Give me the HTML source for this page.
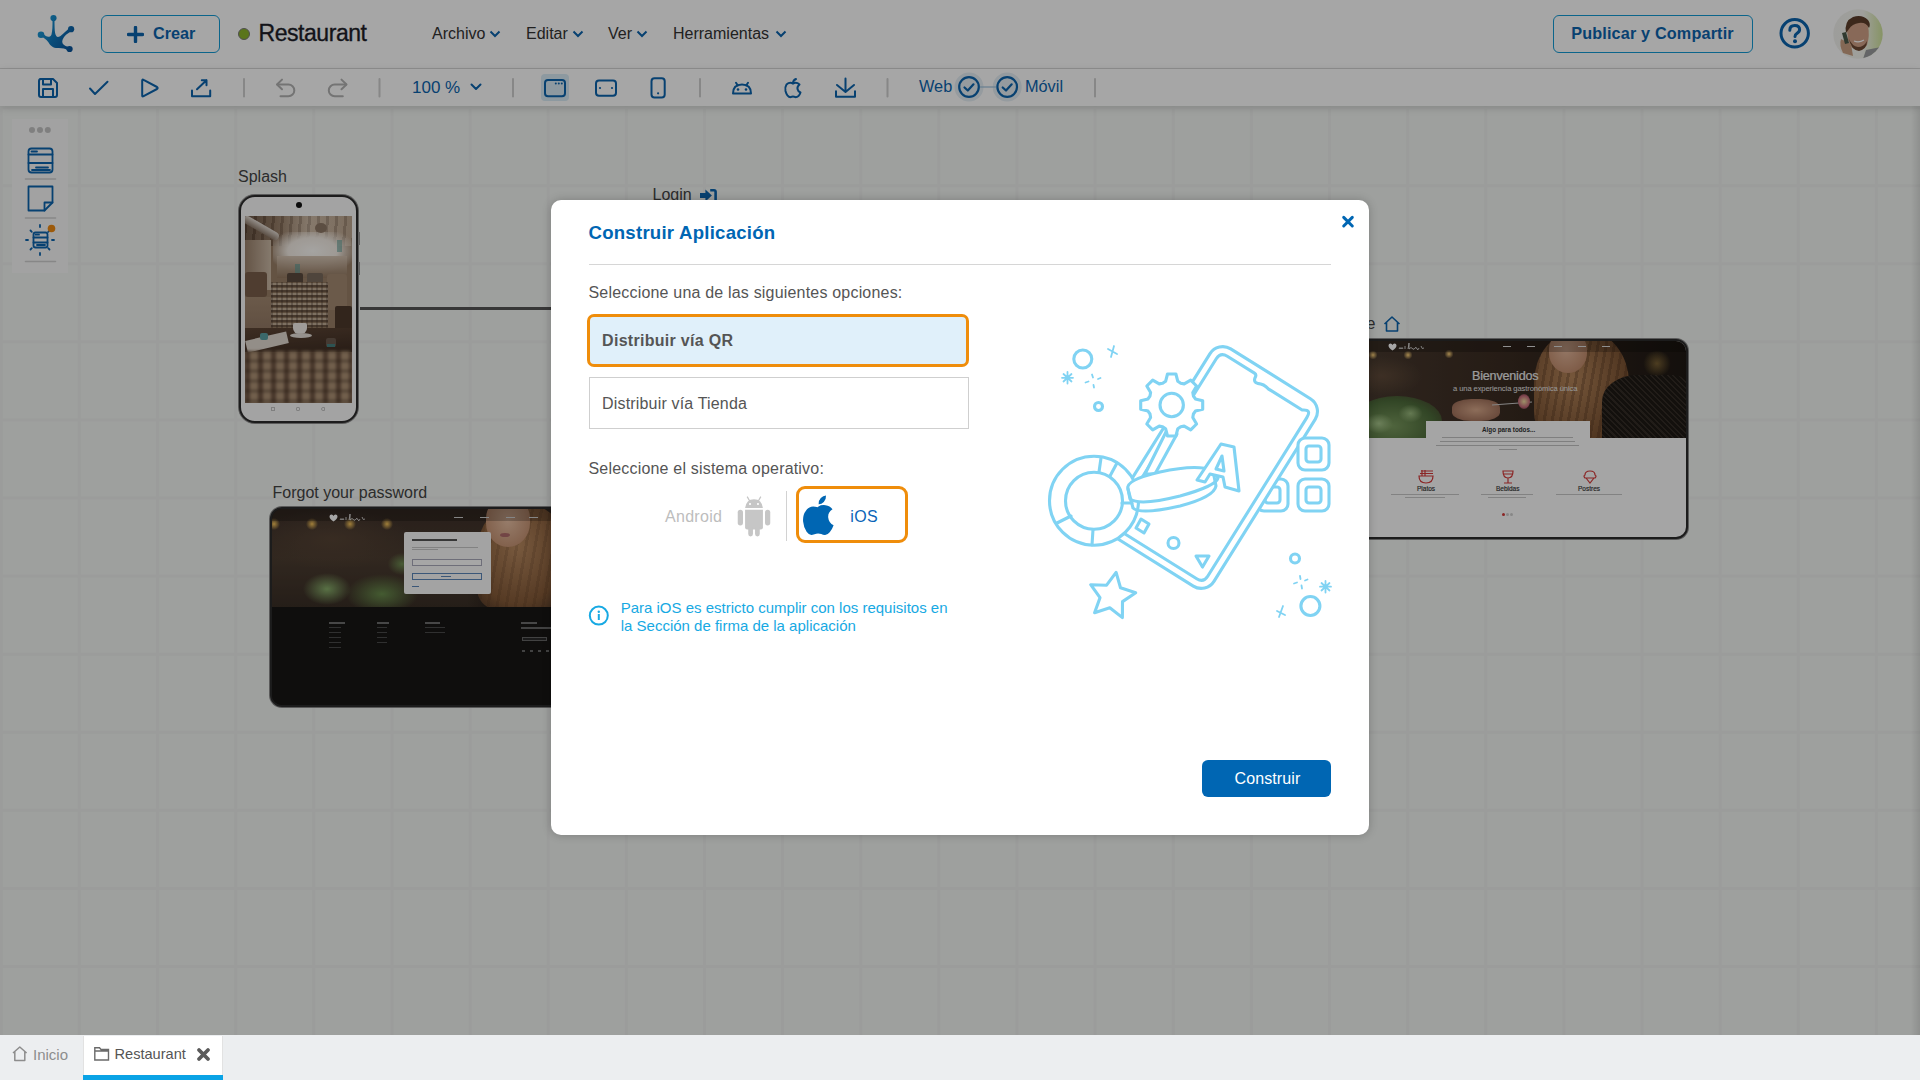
<!DOCTYPE html>
<html><head><meta charset="utf-8">
<style>
*{margin:0;padding:0;box-sizing:border-box}
html,body{width:1920px;height:1080px;overflow:hidden;background:#fff;font-family:"Liberation Sans",sans-serif;position:relative}
.abs{position:absolute}
#topbar{left:0;top:0;width:1920px;height:69px;background:#fff;border-bottom:1px solid #dcdcdc}
#toolbar{left:0;top:69px;width:1920px;height:37px;background:#fff;box-shadow:0 2px 8px rgba(0,0,0,.14)}
#canvas{left:0;top:106px;width:1920px;height:929px;background-color:#f3f6f3}
#tabs{left:0;top:1035px;width:1920px;height:45px;background:#eceef0}
#overlay{left:0;top:0;width:1920px;height:1035px;background:rgba(0,0,0,.35)}
.txt{white-space:nowrap;line-height:1}
.menu{font-size:16px;color:#333}
.sep{width:2px;height:19px;background:#bdbdbd}
#modal{left:551px;top:200px;width:818px;height:635px;background:#fff;border-radius:10px;box-shadow:0 0 10px rgba(0,0,0,.22)}
</style></head>
<body>
<div id="canvas" class="abs"><svg width="1920" height="929" style="position:absolute;left:0;top:0" fill="#eef0ee"><rect x="-0.20" y="0" width="3" height="929"/><rect x="77.93" y="0" width="3" height="929"/><rect x="156.06" y="0" width="3" height="929"/><rect x="234.19" y="0" width="3" height="929"/><rect x="312.32" y="0" width="3" height="929"/><rect x="390.45" y="0" width="3" height="929"/><rect x="468.58" y="0" width="3" height="929"/><rect x="546.71" y="0" width="3" height="929"/><rect x="624.84" y="0" width="3" height="929"/><rect x="702.97" y="0" width="3" height="929"/><rect x="781.10" y="0" width="3" height="929"/><rect x="859.23" y="0" width="3" height="929"/><rect x="937.36" y="0" width="3" height="929"/><rect x="1015.49" y="0" width="3" height="929"/><rect x="1093.62" y="0" width="3" height="929"/><rect x="1171.75" y="0" width="3" height="929"/><rect x="1249.88" y="0" width="3" height="929"/><rect x="1328.01" y="0" width="3" height="929"/><rect x="1406.14" y="0" width="3" height="929"/><rect x="1484.27" y="0" width="3" height="929"/><rect x="1562.40" y="0" width="3" height="929"/><rect x="1640.53" y="0" width="3" height="929"/><rect x="1718.66" y="0" width="3" height="929"/><rect x="1796.79" y="0" width="3" height="929"/><rect x="1874.92" y="0" width="3" height="929"/><rect x="0" y="0.20" width="1920" height="3"/><rect x="0" y="78.27" width="1920" height="3"/><rect x="0" y="156.34" width="1920" height="3"/><rect x="0" y="234.41" width="1920" height="3"/><rect x="0" y="312.48" width="1920" height="3"/><rect x="0" y="390.55" width="1920" height="3"/><rect x="0" y="468.62" width="1920" height="3"/><rect x="0" y="546.69" width="1920" height="3"/><rect x="0" y="624.76" width="1920" height="3"/><rect x="0" y="702.83" width="1920" height="3"/><rect x="0" y="780.90" width="1920" height="3"/><rect x="0" y="858.97" width="1920" height="3"/></svg></div>
<div id="canvasitems">
 <div class="abs" style="left:12px;top:119px;width:56px;height:154px;background:#f9f9f9"></div>
 <svg class="abs" style="left:0;top:110px" width="80" height="170" viewBox="0 110 80 170" fill="none" stroke-linecap="round" stroke-linejoin="round">
  <g fill="#c4c4c4"><circle cx="32" cy="130" r="3"/><circle cx="40" cy="130" r="3"/><circle cx="47.8" cy="130" r="3"/></g>
  <g stroke="#d0d0d0" stroke-width="1.6"><path d="M25.5 179H55.5M25.5 218H55.5M25.5 261.5H55.5"/></g>
  <g stroke="#0c64ae" stroke-width="1.8">
   <rect x="28.5" y="148.5" width="24" height="24" rx="3"/>
   <path d="M28.5 154.5H52.5M28.5 163H52.5M31.5 151.5H37M36 167.5H48M32 170H50"/>
   <path d="M28.5 186.5H52.5V202.5L44.5 210.5H28.5Z"/>
   <path d="M44.5 210.5V202.5H52.5"/>
   <rect x="33.5" y="232.5" width="14" height="15" rx="2"/>
   <path d="M33.5 237.5H47.5M33.5 242.5H47.5M35.5 234.7H39M37 245H45"/>
   <path d="M40 225V227M40 253V255M26 240H28M52 240H54M30.5 230.5L31.8 231.8M49.5 230.5L48.2 231.8M30.5 249.5L31.8 248.2M49.5 249.5L48.2 248.2"/>
  </g>
  <circle cx="51.5" cy="228.5" r="3.8" fill="#f08a12"/>
 </svg>

 <div class="abs txt" style="left:238px;top:169px;font-size:16px;color:#444">Splash</div>
 <div class="abs" style="left:238.5px;top:194.5px;width:119px;height:228px;border-radius:16px;border:2.6px solid #2b2b2b;box-shadow:0 0 0 1px #8a8a8a;background:#fafafa;overflow:hidden">
  <div class="abs" style="left:55.5px;top:5.5px;width:6px;height:6px;border-radius:50%;background:#111"></div>
  <div class="abs" style="left:4.5px;top:19px;width:107px;height:187px;overflow:hidden;background:#9a8068">
   <div class="abs" style="left:0;top:0;width:107px;height:30px;background:linear-gradient(90deg,#5e4838 0,#8a705a 30%,#c8b4a0 60%,#b59d86 100%)"></div>
   <div class="abs" style="left:0;top:0;width:107px;height:30px;background:repeating-linear-gradient(95deg,rgba(60,45,35,.18) 0 3px,rgba(255,240,220,.1) 3px 9px)"></div>
   <div class="abs" style="left:-4px;top:8px;width:40px;height:8px;background:linear-gradient(180deg,#e4dcd4,#8d7a6a);transform:rotate(30deg);border-radius:4px"></div>
   <div class="abs" style="left:28px;top:16px;width:79px;height:42px;background:radial-gradient(ellipse 45px 24px at 50% 45%,#fdfbf8 0,#f3ece4 55%,rgba(225,210,195,0) 100%)"></div>
   <div class="abs" style="left:70px;top:7px;width:12px;height:10px;border-radius:50%;background:#8e7866"></div>
   <div class="abs" style="left:0;top:24px;width:26px;height:50px;background:linear-gradient(90deg,#9b826c,#cdbba8)"></div>
   <div class="abs" style="left:32px;top:40px;width:70px;height:22px;background:linear-gradient(180deg,#d2c0ae,#937860);opacity:.9"></div>
   <div class="abs" style="left:50px;top:48px;width:5px;height:14px;background:#5a9a94;opacity:.6"></div>
   <div class="abs" style="left:92px;top:24px;width:5px;height:12px;background:#5a9a94;opacity:.55"></div>
   <div class="abs" style="left:42px;top:57px;width:16px;height:12px;background:#5b4a3e;border-radius:2px"></div>
   <div class="abs" style="left:62px;top:57px;width:16px;height:12px;background:#7a6a5c;border-radius:2px"></div>
   <div class="abs" style="left:0;top:56px;width:22px;height:25px;background:#7a5f4a;border-radius:3px"></div>
   <div class="abs" style="left:0;top:81px;width:30px;height:45px;background:linear-gradient(180deg,#a48a72,#8e7460)"></div>
   <div class="abs" style="left:82px;top:58px;width:20px;height:36px;background:#a58a72;border-radius:3px"></div>
   <div class="abs" style="left:90px;top:90px;width:17px;height:25px;background:#4d3a2c;border-radius:2px"></div>
   <div class="abs" style="left:26px;top:66px;width:57px;height:50px;background:repeating-linear-gradient(0deg,#6e5846 0 2px,#c0ac96 2px 4px,#917860 4px 5px),#917860;border-radius:3px 3px 0 0;filter:blur(.5px)"></div>
   <div class="abs" style="left:26px;top:66px;width:57px;height:50px;background:repeating-linear-gradient(90deg,rgba(60,45,35,.3) 0 2px,transparent 2px 5px)"></div>
   <div class="abs" style="left:0;top:112px;width:107px;height:24px;background:linear-gradient(175deg,#5e4636,#3e2d22)"></div>
   <div class="abs" style="left:48px;top:107px;width:14px;height:11px;border-radius:2px 2px 6px 6px;background:#f4f0ec"></div>
   <div class="abs" style="left:45px;top:117px;width:22px;height:5px;border-radius:50%;background:#e6e0da"></div>
   <div class="abs" style="left:1px;top:120px;width:42px;height:12px;background:#e2dad2;transform:rotate(-13deg)"></div>
   <div class="abs" style="left:15px;top:117px;width:8px;height:7px;background:#5aa0a4;border-radius:2px"></div>
   <div class="abs" style="left:81px;top:122px;width:10px;height:9px;background:#6b5a4e;border-radius:2px"></div>
   <div class="abs" style="left:82px;top:128px;width:8px;height:3px;background:#46807f"></div>
   <div class="abs" style="left:0;top:135px;width:107px;height:52px;background:repeating-linear-gradient(90deg,#6e5442 0 5px,#ae9276 5px 13px),#8f735a;filter:blur(1.5px)"></div>
   <div class="abs" style="left:0;top:135px;width:107px;height:52px;background:repeating-linear-gradient(0deg,rgba(50,35,25,.25) 0 4px,transparent 4px 10px);filter:blur(1px)"></div>
  </div>
  <div class="abs" style="left:30px;top:210px;width:4px;height:4px;border:1px solid #c4c4c4"></div>
  <div class="abs" style="left:55px;top:210px;width:4px;height:4px;border:1px solid #c4c4c4;border-radius:1px"></div>
  <div class="abs" style="left:80px;top:210px;width:4px;height:4px;border:1px solid #c4c4c4;border-radius:50% 0 0 50%"></div>
 </div>
 <div class="abs" style="left:358px;top:232px;width:2px;height:13px;background:#999"></div>
 <div class="abs" style="left:358px;top:262px;width:2px;height:13px;background:#999"></div>
 <div class="abs" style="left:360px;top:307px;width:200px;height:2.5px;background:#555"></div>

 <div class="abs txt" style="left:652.5px;top:187px;font-size:16px;color:#444">Login</div>
 <svg class="abs" style="left:698px;top:186px" width="22" height="14" viewBox="0 0 22 14"><path d="M2 6.9H7.4V3.4L13.9 9.5L7.4 15.5V11.9H2Z" fill="#0c64ae"/><path d="M12.2 4.2H16Q17.6 4.2 17.6 5.8V16" stroke="#0c64ae" stroke-width="2.6" fill="none"/></svg>

 <div class="abs txt" style="left:272.5px;top:484.7px;font-size:16px;color:#444">Forgot your password</div>
 <div class="abs" style="left:269.5px;top:507px;width:420px;height:200px;border-radius:12px;border:2.6px solid #2b2b2b;box-shadow:0 0 0 1px #8a8a8a;background:#181614;overflow:hidden">
  <div class="abs" style="left:0;top:0;width:420px;height:98px;background:
    
    radial-gradient(ellipse 30px 50px at 225px 95px,rgba(40,30,25,.9),transparent),
    radial-gradient(ellipse 30px 20px at 55px 80px,rgba(140,180,110,.95),transparent 80%),
    radial-gradient(ellipse 45px 25px at 110px 85px,rgba(110,150,80,.9),transparent 80%),
    radial-gradient(ellipse 18px 14px at 130px 55px,rgba(120,160,90,.8),transparent 80%),
    radial-gradient(circle 6px at 2px 15px,#f7c45a,transparent),radial-gradient(circle 6px at 40px 15px,#f7c45a,transparent),radial-gradient(circle 6px at 78px 15px,#f7c45a,transparent),radial-gradient(circle 6px at 115px 15px,#f7c45a,transparent),
    radial-gradient(ellipse 80px 30px at 60px 30px,rgba(90,70,55,.8),transparent),
    linear-gradient(180deg,#3d3029,#4c3d31 50%,#3a2f26)"></div>
  <div class="abs" style="left:205px;top:-5px;width:90px;height:105px;border-radius:45% 45% 20% 20%;background:repeating-linear-gradient(100deg,rgba(60,35,20,.14) 0 3px,transparent 3px 9px),radial-gradient(ellipse at 45% 40%,#b98a60,#845a38 65%,rgba(80,50,30,.3) 100%)"></div>
  <div class="abs" style="left:214px;top:-10px;width:44px;height:48px;border-radius:40% 40% 50% 50%;background:radial-gradient(ellipse at 50% 45%,#e8c0a4,#c49070 80%)"></div>
  <div class="abs" style="left:228px;top:24px;width:10px;height:4px;border-radius:50%;background:#b06a6a"></div>
  <div class="abs" style="left:0;top:0;width:420px;height:12px;background:rgba(0,0,0,.22)"></div>
  <svg class="abs" style="left:56px;top:4px" width="40" height="10" viewBox="0 0 40 10"><path d="M1.5 3.5Q1.5 1.5 3.5 1.5Q5 1.5 5.5 3Q6 1.5 7.5 1.5Q9.5 1.5 9.5 3.5Q9.5 6 5.5 8.5Q1.5 6 1.5 3.5Z" fill="#fff"/><path d="M12 7Q13 4 14 7Q15 4 16 7M18 4V7M21 7Q22 2 22 1V7Q24 4 26 7Q27 8 28 6Q29 4 30 7Q31 9 32 6M34 4Q35 8 37 6" stroke="#eee" stroke-width="0.8" fill="none"/></svg>
  <div class="abs" style="left:182px;top:8px;width:9px;height:1.2px;background:#ccc"></div>
  <div class="abs" style="left:208px;top:8px;width:9px;height:1.2px;background:#ccc"></div>
  <div class="abs" style="left:234px;top:8px;width:9px;height:1.2px;background:#ccc"></div>
  <div class="abs" style="left:257px;top:8px;width:9px;height:1.2px;background:#ccc"></div>
  <div class="abs" style="left:132px;top:23px;width:87px;height:62px;background:#fbfbfb;border-radius:2px"></div>
  <div class="abs" style="left:140px;top:30px;width:45px;height:2px;background:#555"></div>
  <div class="abs" style="left:140px;top:37.5px;width:66px;height:1.3px;background:#c8c8c8"></div>
  <div class="abs" style="left:140px;top:40px;width:26px;height:1.3px;background:#c8c8c8"></div>
  <div class="abs" style="left:140px;top:50px;width:70px;height:7px;border:1px solid #aab;background:#fff"></div>
  <div class="abs" style="left:140px;top:64px;width:70px;height:7px;border:1px solid #5b86b8"></div>
  <div class="abs" style="left:169px;top:67px;width:10px;height:1px;background:#5b86b8"></div>
  <div class="abs" style="left:140px;top:77px;width:7px;height:1.3px;background:#5b86b8"></div>
  <div class="abs" style="left:0;top:98px;width:420px;height:100px;background:#181614"></div>
  <div class="abs" style="left:57px;top:113px;width:16px;height:1.8px;background:#6e6e6e"></div>
  <div class="abs" style="left:105px;top:113px;width:12px;height:1.8px;background:#6e6e6e"></div>
  <div class="abs" style="left:153px;top:113px;width:15px;height:1.8px;background:#6e6e6e"></div>
  <div class="abs" style="left:249px;top:113px;width:16px;height:1.8px;background:#6e6e6e"></div>
  <div class="abs" style="left:249px;top:118px;width:30px;height:2.2px;background:#666"></div>
  <div class="abs" style="left:250px;top:128px;width:25px;height:4px;border:1px solid #666;background:#2a2a2a"></div>
  <div class="abs" style="left:57px;top:118px;width:12px;height:24px;background:repeating-linear-gradient(180deg,#4a4a4a 0 1px,transparent 1px 5px)"></div>
  <div class="abs" style="left:105px;top:118px;width:10px;height:19px;background:repeating-linear-gradient(180deg,#4a4a4a 0 1px,transparent 1px 5px)"></div>
  <div class="abs" style="left:153px;top:118px;width:20px;height:9px;background:repeating-linear-gradient(180deg,#4a4a4a 0 1px,transparent 1px 5px)"></div>
  <div class="abs" style="left:250px;top:141px;width:28px;height:2px;background:repeating-linear-gradient(90deg,#666 0 3px,transparent 3px 8px)"></div>
  <g></g>
 </div>
 <div class="abs txt" style="left:1332.7px;top:315.8px;font-size:16px;color:#444">Home</div>
 <svg class="abs" style="left:1382px;top:314px" width="20" height="19" viewBox="0 0 20 19"><path d="M2.5 10L10 3L17.5 10M4.5 8.5V17H15.5V8.5" stroke="#0c64ae" stroke-width="1.6" fill="none" stroke-linejoin="round"/></svg>
 <div class="abs" style="left:1050px;top:338.5px;width:638px;height:200px;border-radius:12px;border:2.6px solid #2b2b2b;box-shadow:0 0 0 1px #8a8a8a;background:#fdfdfd;overflow:hidden">
  <div class="abs" style="left:0;top:0;width:638px;height:97px;overflow:hidden;background:
    radial-gradient(circle 4.5px at 321px 14px,#ffd27a,rgba(255,200,100,0) 100%),
    radial-gradient(circle 4.5px at 356px 14px,#ffd27a,rgba(255,200,100,0) 100%),
    radial-gradient(circle 4.5px at 397px 13px,#ffd27a,rgba(255,200,100,0) 100%),
    radial-gradient(ellipse 40px 20px at 330px 35px,rgba(110,85,65,.6),transparent),
    linear-gradient(90deg,#3b2f27 0,#4a3c31 45%,#3b2c22 70%,#1e1813 100%)">
   <div class="abs" style="left:482px;top:-10px;width:95px;height:115px;border-radius:45% 45% 30% 30%;background:repeating-linear-gradient(100deg,rgba(60,35,20,.25) 0 3px,transparent 3px 8px),radial-gradient(ellipse at 40% 40%,#b5855a,#7a5232 70%,rgba(80,50,30,0) 100%)"></div>
   <div class="abs" style="left:497px;top:-8px;width:38px;height:40px;border-radius:40% 40% 50% 50%;background:radial-gradient(ellipse at 45% 40%,#e3b79c,#c08a6a 80%)"></div>
   <div class="abs" style="left:550px;top:34px;width:88px;height:66px;border-radius:40% 20% 0 0;background:repeating-linear-gradient(45deg,rgba(90,80,70,.35) 0 1.5px,transparent 1.5px 4px),#1e1915"></div>
   <div class="abs" style="left:590px;top:10px;width:30px;height:25px;border-radius:50%;background:radial-gradient(circle,rgba(200,160,80,.5),transparent 70%)"></div>
   <div class="abs" style="left:400px;top:58px;width:48px;height:22px;border-radius:40%;background:radial-gradient(ellipse,#d8a88a,#a0705a 80%,rgba(160,110,90,0))"></div>
   <div class="abs" style="left:440px;top:62px;width:40px;height:1.2px;background:#ccc;transform:rotate(-4deg)"></div>
   <div class="abs" style="left:466px;top:53px;width:12px;height:15px;border-radius:50%;background:radial-gradient(circle,#f0e0a0,#c56a7a 60%,rgba(200,100,100,0))"></div>
   <div class="abs" style="left:300px;top:55px;width:90px;height:50px;border-radius:50% 50% 0 0;background:radial-gradient(ellipse 14px 10px at 30% 55%,#a6c48a,transparent),radial-gradient(ellipse 12px 9px at 65% 35%,#9aba7e,transparent),radial-gradient(ellipse at 45% 60%,#7a9a5e,#4d6b3a 60%,rgba(60,80,40,0) 100%)"></div>
   <div class="abs" style="left:0;top:0;width:638px;height:11px;background:rgba(0,0,0,.22)"></div>
   <svg class="abs" style="left:335px;top:1px" width="42" height="10" viewBox="0 0 42 10"><path d="M1.5 3.5Q1.5 1.5 3.5 1.5Q5 1.5 5.5 3Q6 1.5 7.5 1.5Q9.5 1.5 9.5 3.5Q9.5 6 5.5 8.5Q1.5 6 1.5 3.5Z" fill="#fff"/><path d="M12 7Q13 4 14 7Q15 4 16 7M18 4V7M21 7Q22 2 22 1V7Q24 4 26 7Q27 8 28 6Q29 4 30 7Q31 9 32 6M34 4Q35 8 37 6" stroke="#eee" stroke-width="0.8" fill="none"/></svg>
   <div class="abs" style="left:451px;top:5px;width:8px;height:1.2px;background:#ddd"></div>
   <div class="abs" style="left:475px;top:5px;width:8px;height:1.2px;background:#ddd"></div>
   <div class="abs" style="left:502px;top:5px;width:8px;height:1.2px;background:#ddd"></div>
   <div class="abs" style="left:526px;top:5px;width:8px;height:1.2px;background:#ddd"></div>
   <div class="abs" style="left:550px;top:5px;width:8px;height:1.2px;background:#ddd"></div>
  </div>
  <div class="abs txt" style="left:420px;top:29.4px;font-size:12.6px;color:#f0f0f0;letter-spacing:-0.2px;-webkit-text-stroke:.2px #f0f0f0">Bienvenidos</div>
  <div class="abs txt" style="left:401px;top:44.5px;font-size:7.6px;color:#e8e8e8;letter-spacing:-0.1px">a una experiencia gastronómica única</div>
  <div class="abs" style="left:373.5px;top:80px;width:164px;height:30px;background:#fdfdfd"></div>
  <div class="abs txt" style="left:430px;top:86px;font-size:6.3px;font-weight:700;color:#333">Algo para todos...</div>
  <div class="abs" style="left:390px;top:96.8px;width:131px;height:1px;background:#c4c4c4"></div>
  <div class="abs" style="left:388px;top:100.7px;width:135px;height:1px;background:#c4c4c4"></div>
  <div class="abs" style="left:384px;top:104.6px;width:143px;height:1px;background:#c4c4c4"></div>
  <div class="abs" style="left:447px;top:108.4px;width:18px;height:1px;background:#c4c4c4"></div>
  <svg class="abs" style="left:351px;top:126px" width="210" height="20" viewBox="0 0 210 20" fill="none" stroke="#d63a3a" stroke-width="1.2">
   <path d="M16 9H30Q30 16 23 16Q16 16 16 9ZM17 6.5H30M18 4H30M19 3V9M22 3V9"/>
   <path d="M100 4H110Q110 11 105 11Q100 11 100 4ZM105 11V16M101 16H109M100 7H110"/>
   <path d="M182 8Q182 4 187 4Q192 4 192 8Q194 9 192 11H182Q180 9 182 8ZM183 11L187 16L191 11"/>
  </svg>
  <div class="abs txt" style="left:365px;top:145.5px;font-size:6.5px;font-weight:400;color:#333;-webkit-text-stroke:.15px #333">Platos</div>
  <div class="abs txt" style="left:444px;top:145.5px;font-size:6.5px;font-weight:400;color:#333;-webkit-text-stroke:.15px #333">Bebidas</div>
  <div class="abs txt" style="left:526px;top:145.5px;font-size:6.5px;font-weight:400;color:#333;-webkit-text-stroke:.15px #333">Postres</div>
  <div class="abs" style="left:339px;top:153px;width:68px;height:1.1px;background:#c8c8c8"></div>
  <div class="abs" style="left:353px;top:156.3px;width:40px;height:1.1px;background:#c8c8c8"></div>
  <div class="abs" style="left:429px;top:153px;width:52px;height:1.1px;background:#c8c8c8"></div>
  <div class="abs" style="left:436px;top:156.3px;width:38px;height:1.1px;background:#c8c8c8"></div>
  <div class="abs" style="left:504px;top:153px;width:66px;height:1.1px;background:#c8c8c8"></div>
  <div class="abs" style="left:449.5px;top:172.5px;width:3px;height:3px;border-radius:50%;background:#d63a3a"></div>
  <div class="abs" style="left:453.5px;top:172.5px;width:3px;height:3px;border-radius:50%;background:#d0d0d0"></div>
  <div class="abs" style="left:457.5px;top:172.5px;width:3px;height:3px;border-radius:50%;background:#d0d0d0"></div>
 </div>
</div>

<div id="topbar" class="abs">
 <svg class="abs" style="left:30px;top:10px" width="50" height="46" viewBox="30 10 50 46">
  <defs><linearGradient id="lg" gradientUnits="userSpaceOnUse" x1="38" y1="30" x2="72" y2="50"><stop offset="0" stop-color="#1b9ad6"/><stop offset=".5" stop-color="#0e73b8"/><stop offset="1" stop-color="#0a5299"/></linearGradient></defs>
  <g fill="url(#lg)">
   <path d="M52.5 20C52.6 26 52.4 31 51.5 34.5C50.8 36.6 48.3 37.6 45.8 36L42.5 33.2L41.2 36.8C44 37.8 46 39.2 48 41.8C50 44.8 51.8 47.6 56 47.9C60 48.1 63 47.7 66 49.2L68.6 51.2L70.6 47.4C67 46.6 63.6 45.6 62.5 43.2C61.6 40.6 63 38 66 34.8L72.2 30.6L70 27.4C66 31 62 35 59.6 36.5C57 37.8 55.7 36 55.1 33C54.6 30 54.5 25 54.5 20Z"/>
   <circle cx="53.5" cy="18.1" r="3.1"/>
   <circle cx="71.1" cy="29.2" r="3.1"/>
   <circle cx="41" cy="34.7" r="3.3"/>
   <circle cx="69.6" cy="49" r="3.1"/>
  </g>
 </svg>
 <div class="abs" style="left:101px;top:15px;width:119px;height:38px;border:1.6px solid #129bd6;border-radius:6px"></div>
 <svg class="abs" style="left:127px;top:26px" width="17" height="17"><path d="M8.5 1.5V15.5M1.5 8.5H15.5" stroke="#0c64ae" stroke-width="3.4" stroke-linecap="round"/></svg>
 <div class="abs txt" style="left:153px;top:25px;font-size:16.2px;font-weight:700;color:#0c64ae">Crear</div>
 <div class="abs" style="left:238px;top:28px;width:12px;height:12px;border-radius:50%;background:#8bb42a;border:1px solid #7a7a7a"></div>
 <div class="abs txt" style="left:258.5px;top:22.4px;font-size:23px;letter-spacing:-0.45px;color:#1e1e28;-webkit-text-stroke:0.35px #1e1e28">Restaurant</div>
 <div class="abs txt menu" style="left:432px;top:26px">Archivo</div>
 <svg class="abs" style="left:489px;top:30px" width="12" height="8"><path d="M1.5 1.5L6 6L10.5 1.5" stroke="#0c64ae" stroke-width="2" fill="none"/></svg>
 <div class="abs txt menu" style="left:526px;top:26px">Editar</div>
 <svg class="abs" style="left:572px;top:30px" width="12" height="8"><path d="M1.5 1.5L6 6L10.5 1.5" stroke="#0c64ae" stroke-width="2" fill="none"/></svg>
 <div class="abs txt menu" style="left:608px;top:26px">Ver</div>
 <svg class="abs" style="left:636px;top:30px" width="12" height="8"><path d="M1.5 1.5L6 6L10.5 1.5" stroke="#0c64ae" stroke-width="2" fill="none"/></svg>
 <div class="abs txt menu" style="left:673px;top:26px">Herramientas</div>
 <svg class="abs" style="left:775px;top:30px" width="12" height="8"><path d="M1.5 1.5L6 6L10.5 1.5" stroke="#0c64ae" stroke-width="2" fill="none"/></svg>
 <div class="abs" style="left:1553px;top:15px;width:200px;height:38px;border:1.6px solid #129bd6;border-radius:6px"></div>
 <div class="abs txt" style="left:1571.2px;top:25px;font-size:16.2px;font-weight:700;color:#0c64ae;letter-spacing:0.17px">Publicar y Compartir</div>
 <svg class="abs" style="left:1778px;top:17px" width="34" height="34" viewBox="0 0 34 34"><circle cx="16.7" cy="16.3" r="13.7" stroke="#0c64ae" stroke-width="3" fill="none"/><path d="M11.8 13.2Q11.8 8.4 16.8 8.4Q21.6 8.4 21.6 12.6Q21.6 15 19 16.4Q17 17.5 17 19.6" stroke="#0c64ae" stroke-width="3" fill="none" stroke-linecap="round"/><circle cx="17" cy="24.3" r="2" fill="#0c64ae"/></svg>
 <svg class="abs" style="left:1833px;top:9px" width="50" height="50" viewBox="0 0 50 50">
   <defs><clipPath id="av"><circle cx="25" cy="25" r="24.7"/></clipPath>
   <linearGradient id="avbg" x1="0" y1="0" x2="1" y2="0"><stop offset="0" stop-color="#f2f2ee"/><stop offset=".6" stop-color="#f4f5ef"/><stop offset="1" stop-color="#cfe39a"/></linearGradient></defs>
   <g clip-path="url(#av)">
    <rect width="50" height="50" fill="url(#avbg)"/>
    <path d="M30 50L33 41L48 38L50 50Z" fill="#9a9c9e"/>
    <path d="M14 22Q13 12 22 10Q32 9 35 17Q37 27 34 36Q30 42 24 41Q17 39 15 31Z" fill="#d1a287"/>
    <path d="M13 24Q11 12 20 8Q29 5 35 11Q38 15 36 19Q33 13 26 14Q19 15 16 20Z" fill="#5c3e2a"/>
    <path d="M16 30Q19 37 25 38Q31 38 34 32Q34 40 26 42Q18 41 16 30Z" fill="#6e4b35"/>
    <path d="M21 32Q26 34 31 31" stroke="#fff" stroke-width="1.2" fill="none"/>
    <path d="M8 30Q6 36 10 44L20 47L18 35Z" fill="#caa083"/>
    <path d="M9 24L13 23L16 34L12 35Z" fill="#4a5a4a"/>
   </g>
  </svg>
</div>
<div id="toolbar" class="abs">

 <div class="abs" style="left:541px;top:5px;width:28px;height:26.5px;border-radius:4px;background:#d9ecf6"></div>
 <div class="abs txt" style="left:412px;top:10px;font-size:17px;color:#0c64ae">100 %</div>
 <div class="abs txt" style="left:919px;top:9.2px;font-size:16.3px;color:#0c64ae">Web</div>
 <div class="abs txt" style="left:1025px;top:9.2px;font-size:16.3px;color:#0c64ae">Móvil</div>
 <svg class="abs" style="left:950px;top:0" width="80" height="37" viewBox="950 69 80 37">
  <circle cx="969" cy="87" r="14.5" fill="#e5eef4"/><circle cx="1007.2" cy="87" r="14.5" fill="#e5eef4"/>
  <path d="M980 87H996" stroke="#9ec3de" stroke-width="1.2"/>
  <g stroke="#0c64ae" stroke-width="2.2" fill="none" stroke-linecap="round" stroke-linejoin="round">
   <circle cx="969" cy="87" r="9.8"/><circle cx="1007.2" cy="87" r="9.8"/>
   <path d="M964.5 87.5L967.8 90.5L973.5 84.3M1002.7 87.5L1006 90.5L1011.7 84.3"/>
  </g>
 </svg>
 <svg class="abs" style="left:0;top:0" width="1920" height="37" viewBox="0 69 1920 37" fill="none" stroke-linecap="round" stroke-linejoin="round">
  <g stroke="#0c64ae" stroke-width="2">
   <path d="M40 79H53L57 83V95Q57 97 55 97H41Q39 97 39 95V81Q39 79 41 79Z"/>
   <path d="M43 79.5V84.5H51V79.5"/>
   <path d="M43 96.5V89H53V96.5"/>
   <path d="M90 88.5L95 94L107.5 81.8"/>
   <path d="M142.2 80.5V95.5Q142.2 97 143.6 96.2L157 89Q158.3 88 157 87L143.6 79.8Q142.2 79 142.2 80.5Z"/>
   <path d="M192 90.5V96.3H210.2V90.5"/>
   <path d="M197 89.2L206.5 80.2M201.8 80.2H206.5V85.2"/>
   <rect x="545" y="80" width="20" height="16.2" rx="3"/>
   <rect x="596" y="80.5" width="20" height="15.2" rx="3"/>
   <rect x="651.5" y="78.2" width="13.2" height="19.2" rx="3"/>
   <path d="M836 91.2V96.8H855V91.2"/>
   <path d="M845.5 78.5V91.8M837 85L845.5 92L854 85"/>
   <path d="M786.5 84.5Q789.5 81.8 793 83.5Q796.5 81.8 799.5 84.5Q797 86.5 797.5 89Q798 91.5 800.5 92.5Q799 97 795.5 97.2Q794 96.5 793 96.5Q792 96.5 790.5 97.2Q787 97 785.5 91Q784.8 87 786.5 84.5Z"/>
   <path d="M793 83.2Q793 80.2 796 79"/>
   <path d="M733 93.5Q733 84.5 742 84.5Q751 84.5 751 93.5Z"/>
   <path d="M736 82.8L737.8 85.5M748 82.8L746.2 85.5"/>
  </g>
  <g fill="#0c64ae">
   <circle cx="555.8" cy="83.5" r="1"/><circle cx="558.8" cy="83.5" r="1"/><circle cx="561.8" cy="83.5" r="1"/>
   <circle cx="600" cy="88" r="1.1"/><circle cx="612" cy="88" r="1.1"/>
   <circle cx="658.1" cy="93.3" r="1.1"/>
  </g>
  <g fill="#0c64ae"><circle cx="738" cy="89.5" r="1.3"/><circle cx="746" cy="89.5" r="1.3"/></g>
  <g stroke="#b3b3b3" stroke-width="2">
   <path d="M282 79.6L277 84.5L282 89.2"/><path d="M277.5 84.5H288.4A5.9 5.9 0 0 1 288.4 96.3H280.5"/>
   <path d="M341.5 79.6L346.5 84.5L341.5 89.2"/><path d="M346 84.5H334.7A5.9 5.9 0 0 0 334.7 96.3H342.8"/>
  </g>
  <g stroke="#cfcfcf" stroke-width="2">
   <path d="M244 79V96.5M379.5 79V96.5M513 79V96.5M700 79V96.5M887.5 79V96.5M1095 79V96.5"/>
  </g>
  <g stroke="#0c64ae" stroke-width="2"><path d="M471.5 84.5L476 89L480.5 84.5"/></g>
 </svg>
</div>

<div class="abs" style="left:1911px;top:106px;width:9px;height:929px;background:linear-gradient(90deg,rgba(0,0,0,0),rgba(0,0,0,.1))"></div>
<div id="tabs" class="abs">
 <svg class="abs" style="left:11px;top:10px" width="18" height="18" viewBox="0 0 18 18"><path d="M2 8L8.8 2L15.6 8M3.8 6.5V15.5H13.8V6.5" stroke="#8d8d8d" stroke-width="1.5" fill="none" stroke-linejoin="round"/></svg>
 <div class="abs txt" style="left:33px;top:12px;font-size:15px;color:#8d8d8d">Inicio</div>
 <div class="abs" style="left:82.5px;top:1px;width:140px;height:44px;background:#fff;border-left:1px solid #e2e2e2;border-right:1px solid #e2e2e2"></div>
 <div class="abs" style="left:82.5px;top:40px;width:140px;height:5px;background:#0aa3e6"></div>
 <svg class="abs" style="left:93px;top:11px" width="18" height="16" viewBox="0 0 18 16"><path d="M1.8 1.8H6.5L8 3.5H15.5V14H1.8Z M1.8 5H15.5" stroke="#6a6a6a" stroke-width="1.4" fill="none"/></svg>
 <div class="abs txt" style="left:114.5px;top:12px;font-size:14.6px;color:#555">Restaurant</div>
 <svg class="abs" style="left:196px;top:12px" width="15" height="15" viewBox="0 0 15 15"><path d="M3 3L12 12M12 3L3 12" stroke="#5a5a5a" stroke-width="3.8" stroke-linecap="round"/></svg>
</div>
<div id="overlay" class="abs"></div>
<div id="modal" class="abs">
 <div class="abs txt" style="left:37.5px;top:24px;font-size:18.6px;font-weight:700;color:#0066b3;letter-spacing:0.24px">Construir Aplicación</div>
 <svg class="abs" style="left:789px;top:14px" width="16" height="16" viewBox="0 0 16 16"><path d="M3.7 3.4L12.3 12M12.3 3.4L3.7 12" stroke="#0066b3" stroke-width="3" stroke-linecap="round"/></svg>
 <div class="abs" style="left:38px;top:64px;width:742px;height:1.4px;background:#d6d6d6"></div>
 <div class="abs txt" style="left:37.5px;top:85.4px;font-size:16px;color:#555;letter-spacing:0.19px">Seleccione una de las siguientes opciones:</div>
 <div class="abs" style="left:36px;top:114px;width:382px;height:53px;border:3px solid #ef8d0b;border-radius:7px;background:#e0f0fa"></div>
 <div class="abs txt" style="left:51.1px;top:132.8px;font-size:16px;font-weight:700;color:#555;letter-spacing:0.29px">Distribuir vía QR</div>
 <div class="abs" style="left:38px;top:177px;width:380px;height:52px;border:1px solid #cfcfcf;background:#fff"></div>
 <div class="abs txt" style="left:51.1px;top:196px;font-size:16px;color:#555;letter-spacing:0.17px">Distribuir vía Tienda</div>
 <div class="abs txt" style="left:37.5px;top:261px;font-size:16px;color:#555;letter-spacing:0.19px">Seleccione el sistema operativo:</div>
 <div class="abs txt" style="left:114px;top:309.4px;font-size:16px;color:#bdbdbd;letter-spacing:0.3px">Android</div>
 <svg class="abs" style="left:184px;top:295px" width="38" height="43" viewBox="0 0 36 41" fill="#c6c6c6">
  <path d="M9.5 12.5Q10.5 4 18 4Q25.5 4 26.5 12.5Z"/>
  <path d="M11.5 1.5L14 6M24.5 1.5L22 6" stroke="#c6c6c6" stroke-width="1.2"/>
  <circle cx="14.2" cy="8.6" r="1" fill="#fff"/><circle cx="21.8" cy="8.6" r="1" fill="#fff"/>
  <path d="M9.5 14H26.5V31Q26.5 33 24.5 33H11.5Q9.5 33 9.5 31Z"/>
  <rect x="2.5" y="14" width="5" height="15" rx="2.5"/><rect x="28.5" y="14" width="5" height="15" rx="2.5"/>
  <rect x="12.5" y="30" width="4.5" height="9.5" rx="2.2"/><rect x="19" y="30" width="4.5" height="9.5" rx="2.2"/>
 </svg>
 <div class="abs" style="left:234.5px;top:291px;width:1.4px;height:50px;background:#d2d2d2"></div>
 <div class="abs" style="left:244.6px;top:286px;width:112px;height:56.5px;border:3px solid #ef8d0b;border-radius:9px"></div>
 <svg class="abs" style="left:250px;top:295px" width="36" height="42" viewBox="0 0 36 42">
  <path d="M17.5 11.5Q20 9.8 24.5 10.2Q29 10.8 31.5 14.3Q26.8 17.2 27.2 22.4Q27.8 27.8 32.6 30.2Q31.2 34.3 28.7 37.3Q26.3 40.2 23.8 40Q21.9 39.9 20.3 39.1Q18.7 38.4 17.1 38.4Q15.3 38.4 13.5 39.2Q11.6 40 10.3 40Q7.9 40 5.6 36.8Q2.6 32.4 2.1 26.5Q1.6 19.7 5.1 15.4Q7.9 11.5 12.2 11.4Q14.2 11.4 15.7 12.1Q16.7 12.5 17.5 11.5Z" fill="#0066b3"/>
  <path d="M17.6 9.3Q17.4 5.6 19.8 3.1Q22.1 0.8 25 0.5Q25.3 4.3 22.8 6.9Q20.5 9.4 17.6 9.3Z" fill="#0066b3"/>
 </svg>
 <div class="abs txt" style="left:299.3px;top:309.3px;font-size:16px;color:#0a64b8;letter-spacing:0.3px">iOS</div>
 <svg class="abs" style="left:37px;top:404px" width="24" height="24" viewBox="0 0 24 24"><circle cx="10.8" cy="11.6" r="9" stroke="#17a9e3" stroke-width="2" fill="none"/><rect x="9.8" y="10" width="2" height="6" fill="#17a9e3"/><circle cx="10.8" cy="7.8" r="1.2" fill="#17a9e3"/></svg>
 <div class="abs txt" style="left:69.7px;top:399.4px;font-size:15px;color:#17a9e3;line-height:17.3px">Para iOS es estricto cumplir con los requisitos en<br>la Sección de firma de la aplicación</div>
 <div class="abs" style="left:651px;top:560px;width:129px;height:37px;border-radius:6px;background:#0066b3"></div>
 <div class="abs txt" style="left:683.5px;top:571px;font-size:16px;color:#fff;letter-spacing:0.1px">Construir</div>
 <svg class="abs" style="left:0;top:0" width="818" height="635" viewBox="551 200 818 635" fill="none" stroke="#80d3f3" stroke-width="3.1" stroke-linecap="round" stroke-linejoin="round">
  <rect x="1257" y="479" width="31" height="32" rx="7" fill="#fff"/>
  <rect x="1265" y="487" width="15" height="16" rx="3"/>
  <g transform="rotate(32 1212 467.5)">
   <rect x="1150.0" y="357.0" width="124" height="221" rx="15" fill="#fff"/>
   <path d="M1158.0 373.0Q1158.0 365.0 1166.0 365.0H1198Q1201 365.0 1201 369.0Q1202 373.0 1206 372.0Q1212 369.0 1218 371.0H1258.0Q1266.0 365.0 1266.0 375.0V562.0Q1266.0 570.0 1258.0 570.0H1166.0Q1158.0 570.0 1158.0 562.0Z"/>
  </g>
  <g fill="#fff">
   <rect x="1298" y="438" width="31" height="32" rx="7"/>
   <rect x="1298" y="479" width="31" height="32" rx="7"/>
  </g>
  <rect x="1306" y="446" width="15" height="16" rx="3"/>
  <rect x="1306" y="487" width="15" height="16" rx="3"/>
  <path d="M1166 432L1145 474H1155L1177 434Z" fill="#fff"/>
  <path d="M1162.7 383.3 L1165.6 381.3 L1167.5 374.0 L1175.9 374.0 L1177.8 381.3 L1180.7 383.3 L1184.2 383.9 L1190.7 380.1 L1196.6 386.0 L1192.8 392.5 L1193.4 396.0 L1195.4 398.9 L1202.7 400.8 L1202.7 409.2 L1195.4 411.1 L1193.4 414.0 L1192.8 417.5 L1196.6 424.0 L1190.7 429.9 L1184.2 426.1 L1180.7 426.7 L1177.8 428.7 L1175.9 436.0 L1167.5 436.0 L1165.6 428.7 L1162.7 426.7 L1159.2 426.1 L1152.7 429.9 L1146.8 424.0 L1150.6 417.5 L1150.0 414.0 L1148.0 411.1 L1140.7 409.2 L1140.7 400.8 L1148.0 398.9 L1150.0 396.0 L1150.6 392.5 L1146.8 386.0 L1152.7 380.1 L1159.2 383.9Z" fill="#fff"/>
  <circle cx="1171.7" cy="405" r="11.7"/>
  <circle cx="1094" cy="500.7" r="44.5" fill="#fff"/>
  <circle cx="1094" cy="500.7" r="28.5"/>
  <path d="M1101 458L1099 472M1117 463L1110 476M1057 523L1071 516M1093 529.5L1092 545M1122 503H1132"/>
  <path d="M1128 489Q1125 480 1160 472Q1195 464 1213 470L1218 478Q1216 486 1180 496Q1140 506 1130 499Z" fill="#fff"/>
  <path d="M1128 489L1133 508Q1140 515 1180 506Q1214 497 1216 486L1214 476"/>
  <path d="M1197 480L1221 444L1234 447L1239 491L1225 487L1223 477L1210 474L1205 482Z" fill="#fff"/>
  <path d="M1222 456L1216 469L1224 471Z"/>
  <path d="M1141 519L1149 524L1144 533L1136 528Z"/>
  <circle cx="1173.5" cy="543" r="5.5"/>
  <path d="M1196 556H1209L1202.5 567Z"/>
  <circle cx="1082.8" cy="359" r="9"/>
  <circle cx="1098.5" cy="406.5" r="4"/>
  <circle cx="1295" cy="558.5" r="4.5"/>
  <circle cx="1310.4" cy="606" r="9.5"/>
  <path d="M1116.1 572.4 L1120.5 587.7 L1135.7 592.7 L1122.5 601.6 L1122.4 617.6 L1109.8 607.8 L1094.6 612.7 L1100.0 597.7 L1090.7 584.7 L1106.6 585.2Z"/>
  <g stroke-width="1.8">
   <path d="M1108 349L1117 354M1111 357L1114 346"/>
   <path d="M1277 611L1285 615M1279 617L1283 606"/>
   <path d="M1062 377.8H1073M1067.5 372V383.5M1063.5 374L1071.5 381.5M1071.5 374L1063.5 381.5"/>
   <path d="M1320 586.7H1331M1325.5 581V592.5M1321.5 583L1329.5 590.5M1329.5 583L1321.5 590.5"/>
   <path d="M1092 374.5L1093 377.5M1085.5 382.5L1088.5 381.5M1098 379L1100.5 378M1093.5 385L1094 387.5"/>
   <path d="M1300 576L1300.5 579M1294 583.5L1297 582.5M1305 580.5L1307.5 579.5M1301.5 585.5L1302 588.5"/>
  </g>
 </svg>
</div>
</body></html>
